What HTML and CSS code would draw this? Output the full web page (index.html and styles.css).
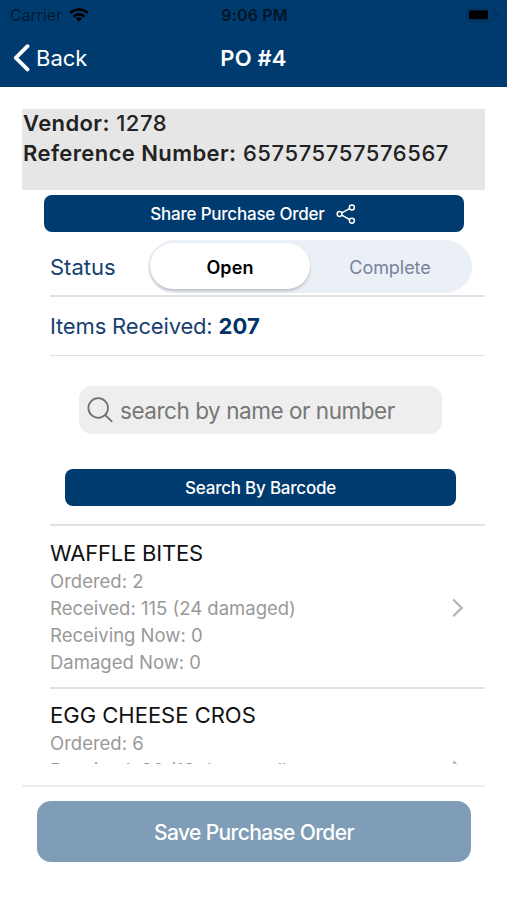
FILE: index.html
```html
<!DOCTYPE html>
<html lang="en">
<head>
<meta charset="utf-8">
<title>PO #4</title>
<link rel="stylesheet" href="styles.css">
</head>
<body>
<header class="header">
  <div class="statusbar">
    <div class="carrier"><span>Carrier</span>
      <svg width="20" height="14" viewBox="0 0 20 14" fill="none" stroke="#000" stroke-width="2.7"><path d="M1.2 5.1a12.6 12.6 0 0 1 17.6 0M4.4 8.6a8 8 0 0 1 11.2 0"/><path d="M10 13.6 6.9 10.6a4.4 4.4 0 0 1 6.2 0z" fill="#000" stroke="none"/></svg>
    </div>
    <div class="clock">9:06 PM</div>
    <div class="battery"><svg width="33" height="16" viewBox="0 0 33 16"><rect x="1" y="1.2" width="28" height="13" rx="3.5" fill="none" stroke="#003058"/><rect x="3" y="3.3" width="19" height="9" rx="1" fill="#000"/><path d="M30.5 5.5v4.4q2-.8 2-2.2t-2-2.2" fill="#003058"/></svg></div>
  </div>
  <nav class="nav">
    <div class="back"><svg width="17" height="28" viewBox="0 0 17 28" fill="none" stroke="#fff" stroke-width="3.8" stroke-linecap="round" stroke-linejoin="round"><path d="M14.5 2.2 2.8 13.8 14.5 25.4"/></svg><span>Back</span></div>
    <h1 class="title">PO #4</h1>
    <div></div>
  </nav>
</header>
<main class="page">
  <section class="vendor">
    <div class="vendor-name"><b>Vendor:</b> 1278</div>
    <div class="vendor-ref"><b>Reference Number:</b> 657575757576567</div>
  </section>
  <button class="btn share"><span>Share Purchase Order</span>
    <svg width="20" height="20" viewBox="0 0 20 20" fill="none" stroke="#fff" stroke-width="1.5"><circle cx="3.6" cy="10" r="2.4"/><circle cx="15.9" cy="3.4" r="2.5"/><circle cx="15.9" cy="16.8" r="2.5"/><path d="M5.8 8.8 13.6 4.7M5.8 11.2l7.8 4.3"/></svg>
  </button>
  <section class="status"><span class="status-label">Status</span>
    <div class="toggle"><span class="option selected">Open</span><span class="option complete">Complete</span></div>
  </section>
  <section class="received"><span>Items Received: <b>207</b></span></section>
  <label class="search"><svg width="26" height="26" viewBox="0 0 26 26" fill="none" stroke="#707070" stroke-width="1.8" stroke-linecap="round"><circle cx="11.2" cy="11" r="9.8"/><path d="m18.2 18 6.5 6.3"/></svg><span>search by name or number</span></label>
  <button class="btn barcode"><span>Search By Barcode</span></button>
  <section class="items">
    <article class="item"><div>
      <h2 class="waffle">WAFFLE BITES</h2>
      <p>Ordered: 2</p><p>Received: 115 (24 damaged)</p><p>Receiving Now: 0</p><p>Damaged Now: 0</p></div>
      <svg class="chevron" width="12" height="20" viewBox="0 0 12 20" fill="none" stroke="#b5b5b5" stroke-width="2.2"><path d="m1.2 1.5 8.5 8.4-8.5 8.4"/></svg>
    </article>
    <article class="item"><div>
      <h2 class="egg">EGG CHEESE CROS</h2>
      <p>Ordered: 6</p><p>Received: 90 (18 damaged)</p></div>
      <svg class="chevron" width="12" height="20" viewBox="0 0 12 20" fill="none" stroke="#b5b5b5" stroke-width="2.2"><path d="m1.2 1.5 8.5 8.4-8.5 8.4"/></svg>
    </article>
  </section>
  <footer class="footer"><button class="save"><span>Save Purchase Order</span></button></footer>
</main>
</body>
</html>
```
FILE: styles.css
```css
* { box-sizing: border-box; }
body { margin: 0; height: 900px; overflow: hidden; background: #fff; font-family: Inter, sans-serif; }
h1, h2, p { margin: 0; font-weight: 400; }
button { border: 0; padding: 0; font-family: inherit; color: #fff; white-space: nowrap; }
svg { flex: none; }
.header { height: 87px; background: #003b6f; }
.statusbar { height: 29px; display: grid; grid-template-columns: 1fr auto 1fr; align-items: center; padding: 0 8px 0 10px; font-size: 16px; }
.carrier { display: flex; gap: 7px; align-items: center; color: #001b35; letter-spacing: -.05px; }
.clock { font-weight: 600; color: #001426; letter-spacing: .2px; }
.battery { display: flex; justify-content: flex-end; }
.nav { height: 57px; display: grid; grid-template-columns: 1fr auto 1fr; align-items: center; padding: 0 13px; color: #fff; }
.back { display: flex; align-items: center; gap: 6px; font-size: 22px; }
.title { font-size: 22px; font-weight: 600; letter-spacing: .2px; }
.page { padding: 22px 22px 0; }
.vendor { height: 81px; background: #e6e6e6; font-size: 22px; line-height: 29.5px; font-weight: 500; color: #222; padding-left: 1px; white-space: nowrap; letter-spacing: .49px; }
.vendor b { font-weight: 600; letter-spacing: .4px; }
.vendor-ref { letter-spacing: .58px; }
.btn { display: flex; align-items: center; justify-content: center; height: 37px; border-radius: 8px; background: #003b6f; font-size: 17px; font-weight: 500; letter-spacing: -.22px; }
.share { width: 420px; margin: 5px 0 0 22px; gap: 11px; padding-right: 2px; }
.status { height: 65px; margin-left: 28px; border-bottom: 2px solid #e2e2e2; display: flex; align-items: center; color: #163f70; font-size: 22px; padding-top: 5px; }
.status-label { width: 98px; padding-top: 1px; }
.toggle { width: 324px; height: 53px; border-radius: 27px; background: #ebeff6; display: flex; padding: 3px 2px 4px; }
.option { flex: 1; display: flex; align-items: center; justify-content: center; font-size: 18px; color: #77839b; padding-top: 4px; }
.selected { border-radius: 24px; background: #fff; color: #000; font-weight: 600; box-shadow: 0 2px 3px #0003; letter-spacing: .1px; }
.complete { letter-spacing: -.05px; }
.received { height: 59px; margin-left: 28px; border-bottom: 1px solid #e2e2e2; display: flex; align-items: center; font-size: 22px; color: #163f70; letter-spacing: -.17px; }
.received b { color: #003369; font-weight: 700; letter-spacing: .1px; }
.search { width: 363px; height: 48px; margin: 30px 0 0 57px; border-radius: 13px; background: #eee; display: flex; align-items: center; gap: 7px; padding-left: 8px; font-size: 22.5px; color: #777; white-space: nowrap; letter-spacing: -.46px; }
.barcode { width: 391px; margin: 35px 0 0 43px; }
.items { height: 240px; overflow: hidden; margin: 18px 0 0 28px; }
.item { height: 162.5px; border-top: 2px solid #e2e2e2; display: flex; justify-content: space-between; align-items: flex-start; padding: 11.5px 21px 0 0; white-space: nowrap; }
.item h2 { font-size: 22px; line-height: 30px; color: #111; }
.item .waffle { letter-spacing: -.2px; }
.item p { font-size: 18.5px; line-height: 27px; color: #999; }
.chevron { margin-top: 60px; }
.footer { height: 77px; margin-top: 21px; border-top: 2px solid #eee; padding: 14px 15px 0; }
.save { display: flex; align-items: center; justify-content: center; width: 434px; height: 61px; border-radius: 14px; background: #7f9db7; font-size: 21px; font-weight: 500; letter-spacing: -.63px; padding-top: 2px; }
```
